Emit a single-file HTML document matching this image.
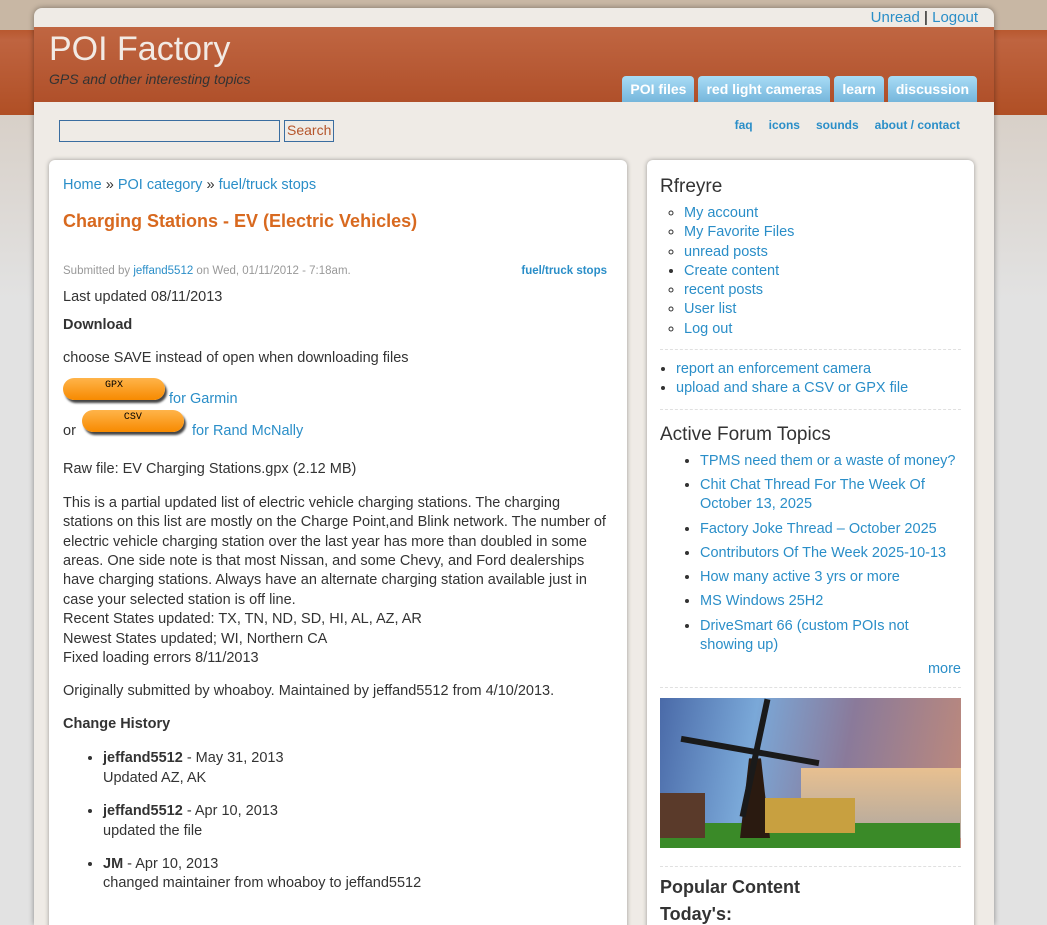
<!DOCTYPE html>
<html style="height:925px;overflow:hidden;background:#e2e2e2"><head><meta charset="utf-8"><style>
*{box-sizing:border-box}
body{margin:0;width:1047px;height:925px;overflow:hidden;font-family:"Liberation Sans",sans-serif;background:linear-gradient(#c8b7a4 0,#c8b7a4 30px,#b8582f 30px,#bf6440 40px,#b04f25 115px,#d8d0c8 115px,#e2e2e2 300px,#e2e2e2) no-repeat;background-size:1047px 925px;position:relative;color:#333}
a{color:#2a8ec8;text-decoration:none}
#page{position:absolute;left:34px;top:8px;width:960px;height:917px;background:#efebe6;border-radius:8px 8px 0 0;box-shadow:0 0 6px rgba(0,0,0,.4);overflow:hidden}
#hdr{position:absolute;left:0;top:19px;width:960px;height:75px;background:linear-gradient(#c06642,#b0502a)}
#top{position:absolute;right:16px;top:1px;font-size:15px}
#title{position:absolute;left:15px;top:3px;color:#f2eae4;font-size:34px}
#slogan{position:absolute;left:15px;top:44px;font-size:14px;font-style:italic;color:#333}
.tabs{position:absolute;right:17px;top:49px;display:flex;gap:4px}
.tabs span{background:linear-gradient(#a8dcf6,#76b6db);color:#fff;font-weight:bold;font-size:14px;padding:5px 8px 0;height:26px;border-radius:4px 4px 0 0}
#search{position:absolute;left:25px;top:112px}
#search .in{display:inline-block;width:221px;height:22px;border:1px solid #3a6da0;vertical-align:middle}
#search .bt{display:inline-block;height:22px;border:1px solid #3a6da0;color:#b5552b;font-size:14px;padding:1px 2px;vertical-align:middle;margin-left:4px}
#sec{position:absolute;right:34px;top:110px;font-size:12px;font-weight:bold}
#sec a{margin-left:16px}
.card{position:absolute;background:#fff;border-radius:6px;box-shadow:0 0 5px rgba(0,0,0,.35)}
#main{left:15px;top:152px;width:578px;height:800px;padding:16px 14px;font-size:14.5px;line-height:19.4px}
#side{left:613px;top:152px;width:327px;height:800px;padding:16px 13px;font-size:14.5px}
p{margin:0}
.btn{display:inline-block;width:102px;height:22px;border-radius:11px;background:linear-gradient(#ffb44a,#f78a00);box-shadow:2px 3px 2px #444;text-align:center;font-family:"Liberation Mono",monospace;font-size:10px;line-height:15px;vertical-align:top;color:#000}
h2{font-size:19px;font-weight:normal;margin:0 0 6px;color:#333}
ul{margin:0;padding-left:24px}
.s li{line-height:19.3px}
hr{border:0;border-top:1px dashed #e0e0e0;margin:10px 0}
</style></head><body>
<div id="page">
<div id="top"><a href="#">Unread</a> <span style="color:#000">|</span> <a href="#">Logout</a></div>
<div id="hdr">
<div id="title">POI Factory</div>
<div id="slogan">GPS and other interesting topics</div>
<div class="tabs"><span>POI files</span><span>red light cameras</span><span>learn</span><span>discussion</span></div>
</div>
<div id="search"><span class="in"></span><span class="bt">Search</span></div>
<div id="sec"><a href="#">faq</a><a href="#">icons</a><a href="#">sounds</a><a href="#">about / contact</a></div>

<div class="card" id="main">
<p><a href="#">Home</a> » <a href="#">POI category</a> » <a href="#">fuel/truck stops</a></p>
<p style="color:#d8691f;font-size:18px;font-weight:bold;margin-top:17px">Charging Stations - EV (Electric Vehicles)</p>
<p style="font-size:11.5px;color:#999;margin-top:30px;position:relative">Submitted by <a href="#">jeffand5512</a> on Wed, 01/11/2012 - 7:18am.<a href="#" style="position:absolute;right:6px;font-weight:bold">fuel/truck stops</a></p>
<p style="margin-top:7px">Last updated 08/11/2013</p>
<p style="margin-top:8px;font-weight:bold">Download</p>
<p style="margin-top:14px">choose SAVE instead of open when downloading files</p>
<p style="margin-top:10px;height:34px"><span class="btn">GPX</span> <a href="#" style="position:relative;top:12px">for Garmin</a></p>
<p style="margin-top:0;height:34px"><span style="position:relative;top:10px">or</span> <span class="btn" style="margin-left:2px;margin-top:-2px">CSV</span> &nbsp;<a href="#" style="position:relative;top:10px">for Rand McNally</a></p>
<p style="margin-top:14px">Raw file: EV Charging Stations.gpx (2.12 MB)</p>
<p style="margin-top:14px">This is a partial updated list of electric vehicle charging stations. The charging stations on this list are mostly on the Charge Point,and Blink network. The number of electric vehicle charging station over the last year has more than doubled in some areas. One side note is that most Nissan, and some Chevy, and Ford dealerships have charging stations. Always have an alternate charging station available just in case your selected station is off line.<br>Recent States updated: TX, TN, ND, SD, HI, AL, AZ, AR<br>Newest States updated; WI, Northern CA<br>Fixed loading errors 8/11/2013</p>
<p style="margin-top:13px">Originally submitted by whoaboy. Maintained by jeffand5512 from 4/10/2013.</p>
<p style="margin-top:14px;font-weight:bold">Change History</p>
<ul style="margin-top:15px;padding-left:40px">
<li><b>jeffand5512</b> - May 31, 2013<br>Updated AZ, AK</li>
<li style="margin-top:14px"><b>jeffand5512</b> - Apr 10, 2013<br>updated the file</li>
<li style="margin-top:14px"><b>JM</b> - Apr 10, 2013<br>changed maintainer from whoaboy to jeffand5512</li>
</ul>
</div>

<div class="card" id="side">
<h2>Rfreyre</h2>
<ul class="s" style="list-style:circle">
<li><a href="#">My account</a></li><li><a href="#">My Favorite Files</a></li><li><a href="#">unread posts</a></li><li style="list-style:disc"><a href="#">Create content</a></li><li><a href="#">recent posts</a></li><li><a href="#">User list</a></li><li><a href="#">Log out</a></li>
</ul>
<hr>
<ul class="s" style="padding-left:16px"><li><a href="#">report an enforcement camera</a></li><li><a href="#">upload and share a CSV or GPX file</a></li></ul>
<hr>
<h2 style="margin-top:14px">Active Forum Topics</h2>
<ul class="s" style="padding-left:40px">
<li style="margin-bottom:5px"><a href="#">TPMS need them or a waste of money?</a></li>
<li style="margin-bottom:5px"><a href="#">Chit Chat Thread For The Week Of October 13, 2025</a></li>
<li style="margin-bottom:5px"><a href="#">Factory Joke Thread – October 2025</a></li>
<li style="margin-bottom:5px"><a href="#">Contributors Of The Week 2025-10-13</a></li>
<li style="margin-bottom:5px"><a href="#">How many active 3 yrs or more</a></li>
<li style="margin-bottom:5px"><a href="#">MS Windows 25H2</a></li>
<li><a href="#">DriveSmart 66 (custom POIs not showing up)</a></li>
</ul>
<p style="text-align:right;margin-top:6px"><a href="#">more</a></p>
<hr>
<div style="height:150px;margin-top:4px;background:linear-gradient(100deg,#4a6aa8,#7aa8d8 30%,#8a7a9a 60%,#c08a7a);position:relative;overflow:hidden">
<div style="position:absolute;right:0;top:70px;width:160px;height:70px;background:linear-gradient(#e8c090,#b0a8a0)"></div>
<div style="position:absolute;left:0;top:125px;width:300px;height:25px;background:#3a8a28"></div>
<div style="position:absolute;left:80px;top:60px;width:30px;height:80px;background:#2a1a10;clip-path:polygon(30% 0,70% 0,100% 100%,0 100%)"></div>
<div style="position:absolute;left:20px;top:50px;width:140px;height:6px;background:#1a1a1a;transform:rotate(10deg)"></div>
<div style="position:absolute;left:92px;top:0;width:6px;height:120px;background:#1a1a1a;transform:rotate(12deg)"></div>
<div style="position:absolute;left:105px;top:100px;width:90px;height:35px;background:#c8a040"></div>
<div style="position:absolute;left:0;top:95px;width:45px;height:45px;background:#5a3a2a"></div>
</div>
<hr style="margin-top:18px">
<h2 style="font-weight:bold;font-size:18px;margin-top:8px">Popular Content</h2>
<h2 style="font-weight:bold;font-size:18px">Today's:</h2>
</div>
</div>
</body></html>
